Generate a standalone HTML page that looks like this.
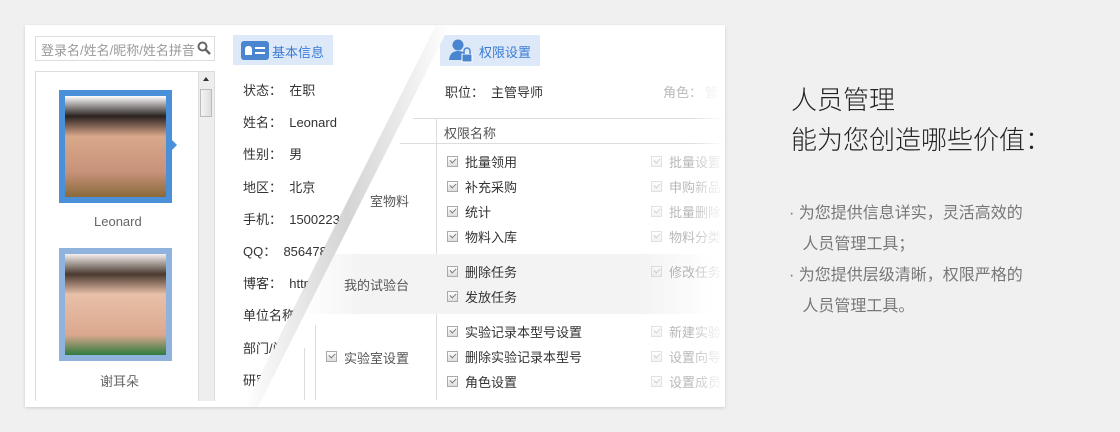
<!DOCTYPE html>
<html><head><meta charset="utf-8"><style>
*{margin:0;padding:0;box-sizing:border-box}
body{width:1120px;height:432px;background:#f0f0f0;font-family:"Liberation Sans","Noto Sans CJK SC",sans-serif;position:relative;overflow:hidden;color:#333}
.a{position:absolute;white-space:nowrap}
.card{position:absolute;left:25px;top:25px;width:700px;height:382px;background:#fff;box-shadow:0 1px 3px rgba(0,0,0,.15)}
.f13{font-size:13px}
.cb{position:absolute;width:11px;height:11px;border:1px solid #aaa;background:linear-gradient(#fff,#ddd)}
.cb:after{content:"";position:absolute;left:2px;top:1px;width:5px;height:3px;border-left:1px solid #777;border-bottom:1px solid #777;transform:rotate(-45deg)}
.fade{opacity:.35}
.full{position:absolute;left:0;top:0;width:1120px;height:432px}
#L{clip-path:polygon(25px 25px,437px 25px,245px 407px,25px 407px)}
#R{clip-path:polygon(450px 25px,725px 25px,725px 407px,258px 407px)}
</style></head><body>
<div class="card"></div>
<svg class="a" style="left:0;top:0" width="1120" height="432">
<defs><linearGradient id="g" x1="0" y1="0" x2="1" y2="0"><stop offset="0" stop-color="#fff"/><stop offset=".5" stop-color="#d4d4d4"/><stop offset="1" stop-color="#fff"/></linearGradient></defs>
<polygon points="436,25 450,25 258,407 244,407" fill="url(#g)"/>
</svg>
<div class="full" id="L">
<div class="a" style="left:35px;top:36px;width:180px;height:25px;border:1px solid #ddd;background:#fff"></div>
<div class="a f13" style="left:41px;top:40px;color:#999">登录名/姓名/昵称/姓名拼音</div>
<svg class="a" style="left:197px;top:41px" width="14" height="14"><circle cx="5.5" cy="5.5" r="4" fill="none" stroke="#666" stroke-width="2"/><line x1="8.5" y1="8.5" x2="13" y2="13" stroke="#666" stroke-width="2.5"/></svg>
<div class="a" style="left:35px;top:71px;width:180px;height:330px;border:1px solid #ddd;border-bottom:none;background:#fff"></div>
<div class="a" style="left:198px;top:72px;width:16px;height:329px;background:#eee;border-left:1px solid #ddd"></div>
<div class="a" style="left:200px;top:89px;width:12px;height:28px;background:linear-gradient(90deg,#f4f4f4,#ddd);border:1px solid #bbb"></div>
<div class="a" style="left:203px;top:77px;border:3px solid transparent;border-bottom:4px solid #333;border-top:none"></div>
<div class="a" style="left:59px;top:90px;width:113px;height:113px;background:#4a90d9;padding:6px"><div style="width:101px;height:101px;background:linear-gradient(180deg,#fff 0%,#2a2220 20%,#d9a88a 40%,#c7927a 75%,#8a6a3a 100%)"></div></div>
<div class="a" style="left:172px;top:140px;border:5px solid transparent;border-left:5px solid #4a90d9;border-right:none"></div>
<div class="a f13" style="left:94px;top:214px;color:#666">Leonard</div>
<div class="a" style="left:59px;top:248px;width:113px;height:113px;background:#8fb3dc;padding:6px"><div style="width:101px;height:101px;background:linear-gradient(180deg,#f5f0ee 0%,#4a3a30 20%,#e8c0a8 40%,#dba88e 80%,#2f7a3f 100%)"></div></div>
<div class="a f13" style="left:100px;top:371px;color:#666">谢耳朵</div>
<div class="a" style="left:233px;top:35px;width:100px;height:30px;background:#dde9f8"></div>
<div class="a" style="left:241px;top:41px;width:28px;height:19px;background:#4a86d0;border-radius:3px"></div>
<div class="a" style="left:245px;top:46px;width:7px;height:9px;background:#fff;border-radius:3px 3px 0 0"></div>
<div class="a" style="left:255px;top:47px;width:10px;height:7px;border-top:2px solid #fff;border-bottom:2px solid #fff"></div>
<div class="a f13" style="left:272px;top:42px;color:#3a7bd5">基本信息</div>
<div class="a f13" style="left:243px;top:75px;width:200px;line-height:32.2px">
状态：&nbsp; 在职<br>姓名：&nbsp; Leonard<br>性别：&nbsp; 男<br>地区：&nbsp; 北京<br>手机：&nbsp; 15002236<br>QQ：&nbsp; 8564781<br>博客：&nbsp; http:<br>单位名称<br>部门/门<br>研究</div>
</div>
<div class="full" id="R">
<div class="a" style="left:440px;top:35px;width:100px;height:31px;background:#dde9f8"></div>
<svg class="a" style="left:448px;top:38px" width="26" height="26"><circle cx="10" cy="7" r="5.5" fill="#4a86d0"/><path d="M1 22 Q2 13 10 13 Q16 13 18 17 L18 22Z" fill="#4a86d0"/><rect x="14" y="16" width="10" height="8" fill="#4a86d0" stroke="#fff"/><path d="M16 16 v-3 a3 3 0 0 1 6 0 v3" fill="none" stroke="#4a86d0" stroke-width="1.5"/></svg>
<div class="a f13" style="left:479px;top:42px;color:#3a7bd5">权限设置</div>
<div class="a f13" style="left:445px;top:82px">职位：</div>
<div class="a f13" style="left:491px;top:82px">主管导师</div>
<div class="a f13" style="left:663px;top:82px;color:#bbb">角色：</div>
<div class="a f13" style="left:705px;top:82px;color:#ddd">管</div>
<div class="a" style="left:413px;top:118px;width:310px;height:1px;background:#ddd"></div>
<div class="a" style="left:400px;top:143px;width:323px;height:1px;background:#ddd"></div>
<div class="a" style="left:436px;top:118px;width:1px;height:282px;background:#ddd"></div>
<div class="a f13" style="left:444px;top:123px;color:#555">权限名称</div>
<div class="a" style="left:300px;top:254px;width:420px;height:60px;background:linear-gradient(90deg,rgba(240,240,240,0),#f3f3f3 15%,#f3f3f3 80%,rgba(243,243,243,0))"></div>
<div class="a f13" style="left:370px;top:191px;color:#555">室物料</div>
<div class="a f13" style="left:344px;top:275px;color:#555">我的试验台</div>
<div class="a" style="left:315px;top:325px;width:1px;height:75px;background:#ddd"></div>
<div class="a" style="left:304px;top:348px;width:1px;height:52px;background:#ddd"></div>
<div class="cb" style="left:326px;top:351px"></div>
<div class="a f13" style="left:344px;top:348px;color:#555">实验室设置</div>
<div class="cb" style="left:447px;top:156px"></div><div class="a f13" style="left:465px;top:152px">批量领用</div>
<div class="cb" style="left:447px;top:181px"></div><div class="a f13" style="left:465px;top:177px">补充采购</div>
<div class="cb" style="left:447px;top:206px"></div><div class="a f13" style="left:465px;top:202px">统计</div>
<div class="cb" style="left:447px;top:231px"></div><div class="a f13" style="left:465px;top:227px">物料入库</div>
<div class="cb" style="left:447px;top:266px"></div><div class="a f13" style="left:465px;top:262px">删除任务</div>
<div class="cb" style="left:447px;top:291px"></div><div class="a f13" style="left:465px;top:287px">发放任务</div>
<div class="cb" style="left:447px;top:326px"></div><div class="a f13" style="left:465px;top:322px">实验记录本型号设置</div>
<div class="cb" style="left:447px;top:351px"></div><div class="a f13" style="left:465px;top:347px">删除实验记录本型号</div>
<div class="cb" style="left:447px;top:376px"></div><div class="a f13" style="left:465px;top:372px">角色设置</div>
<div class="fade">
<div class="cb" style="left:651px;top:156px"></div><div class="a f13" style="left:669px;top:152px">批量设置</div>
<div class="cb" style="left:651px;top:181px"></div><div class="a f13" style="left:669px;top:177px">申购新品</div>
<div class="cb" style="left:651px;top:206px"></div><div class="a f13" style="left:669px;top:202px">批量删除</div>
<div class="cb" style="left:651px;top:231px"></div><div class="a f13" style="left:669px;top:227px">物料分类</div>
<div class="cb" style="left:651px;top:266px"></div><div class="a f13" style="left:669px;top:262px">修改任务</div>
<div class="cb" style="left:651px;top:326px"></div><div class="a f13" style="left:669px;top:322px">新建实验</div>
<div class="cb" style="left:651px;top:351px"></div><div class="a f13" style="left:669px;top:347px">设置向导</div>
<div class="cb" style="left:651px;top:376px"></div><div class="a f13" style="left:669px;top:372px">设置成员</div>
</div>
<div class="a" style="left:690px;top:25px;width:35px;height:382px;background:linear-gradient(90deg,rgba(255,255,255,0),#fff)"></div>
</div>
<div class="a" style="left:791px;top:80px;font-size:26px;line-height:40px;color:#222;font-weight:300">人员管理<br>能为您创造哪些价值：</div>
<div class="a" style="left:789px;top:198px;font-size:16px;line-height:31px;color:#777">·&nbsp;为您提供信息详实，灵活高效的<br>&nbsp;&nbsp;&nbsp;人员管理工具；<br>·&nbsp;为您提供层级清晰，权限严格的<br>&nbsp;&nbsp;&nbsp;人员管理工具。</div>
</body></html>
